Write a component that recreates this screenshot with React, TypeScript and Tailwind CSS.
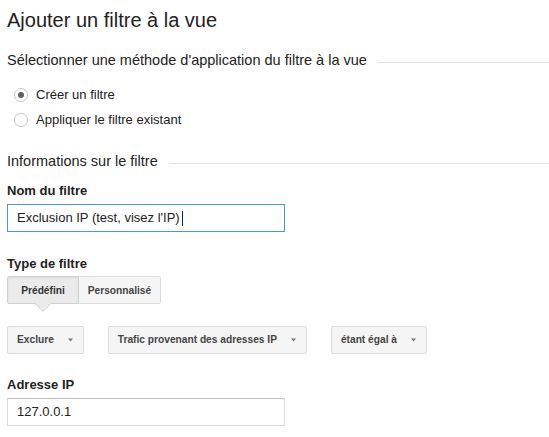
const font = { fontFamily: '"Liberation Sans", Arial, sans-serif' };

function SectionHeader({ title, className }: { title: string; className?: string }) {
  return (
    <div className={`-mr-[7px] flex h-[20px] items-center ${className ?? ""}`}>
      <span className="text-[14.5px] leading-[20px] text-[#222]">{title}</span>
      <div className="ml-[11px] mt-[4px] h-px flex-1 bg-[#e5e5e5]" />
    </div>
  );
}

function Radio({ label, checked }: { label: string; checked?: boolean }) {
  return (
    <label className="flex h-[25px] items-center pl-[7px]">
      <span className="grid h-[14px] w-[14px] place-items-center rounded-full border border-[#c6c6c6] bg-white">
        {checked && <span className="h-[6px] w-[6px] rounded-full bg-[#616161]" />}
      </span>
      <span className="ml-[8px] text-[13px] leading-[25px] text-[#222]">{label}</span>
    </label>
  );
}

function Caret() {
  return (
    <svg width="5" height="4" viewBox="0 0 5 4" className="ml-[14px] shrink-0">
      <path d="M0 0.5h5L2.5 3.5z" fill="#777" />
    </svg>
  );
}

function Dropdown({ label }: { label: string }) {
  return (
    <button className="flex h-[28px] items-center rounded-[2px] border border-[#dcdcdc] bg-[#f5f5f5] pl-[9px] pr-[10px] text-[10.2px] font-bold text-[#444]">
      <span>{label}</span>
      <Caret />
    </button>
  );
}

export default function App() {
  return (
    <div style={font} className="min-h-screen bg-white px-[7px] pt-[8px] text-[#222]">
      <h1 className="text-[20px] leading-[24px] text-[#222]">Ajouter un filtre à la vue</h1>

      <SectionHeader title="Sélectionner une méthode d'application du filtre à la vue" className="mt-[18px]" />

      <div className="mt-[12px]">
        <Radio label="Créer un filtre" checked />
        <Radio label="Appliquer le filtre existant" />
      </div>

      <SectionHeader title="Informations sur le filtre" className="mt-[19px]" />

      <div className="mt-[12px] text-[13px] font-bold leading-[16px] text-[#222]">Nom du filtre</div>
      <div className="mt-[5px] flex h-[28px] w-[278px] items-center border border-[#4d90fe] bg-white pl-[9px] text-[13px] text-[#222]">
        <span>Exclusion IP (test, visez l'IP)</span>
        <span className="ml-[2px] h-[15px] w-px bg-[#222]" />
      </div>

      <div className="mt-[24px] text-[13px] font-bold leading-[16px] text-[#222]">Type de filtre</div>
      <div className="mt-[4px] flex w-fit">
        <div className="relative">
          <button className="flex h-[28px] w-[72px] items-center justify-center rounded-l-[2px] border border-[#d0d0d0] bg-[#ebebeb] pt-[2px] text-[10.2px] font-bold text-[#333] shadow-[inset_0_1px_2px_rgba(0,0,0,0.08)]">
            Prédéfini
          </button>
          <svg width="16" height="9" viewBox="0 0 16 9" className="absolute left-[28px] top-[27px]">
            <path d="M0 0.5L8 8.5L16 0.5" fill="#ebebeb" stroke="#d0d0d0" />
            <rect x="1" y="0" width="14" height="1" fill="#ebebeb" />
          </svg>
        </div>
        <button className="-ml-px flex h-[28px] w-[83px] items-center justify-center rounded-r-[2px] border border-[#dcdcdc] bg-[#f5f5f5] pt-[2px] text-[10.2px] font-bold text-[#444]">
          Personnalisé
        </button>
      </div>

      <div className="mt-[22px] flex gap-[24px]">
        <Dropdown label="Exclure" />
        <Dropdown label="Trafic provenant des adresses IP" />
        <Dropdown label="étant égal à" />
      </div>

      <div className="mt-[23px] text-[13px] font-bold leading-[16px] text-[#222]">Adresse IP</div>
      <div className="mt-[5px] flex h-[28px] w-[278px] items-center border border-[#d9d9d9] border-t-[#c0c0c0] bg-white pl-[9px] text-[13px] text-[#222]">
        127.0.0.1
      </div>
    </div>
  );
}
